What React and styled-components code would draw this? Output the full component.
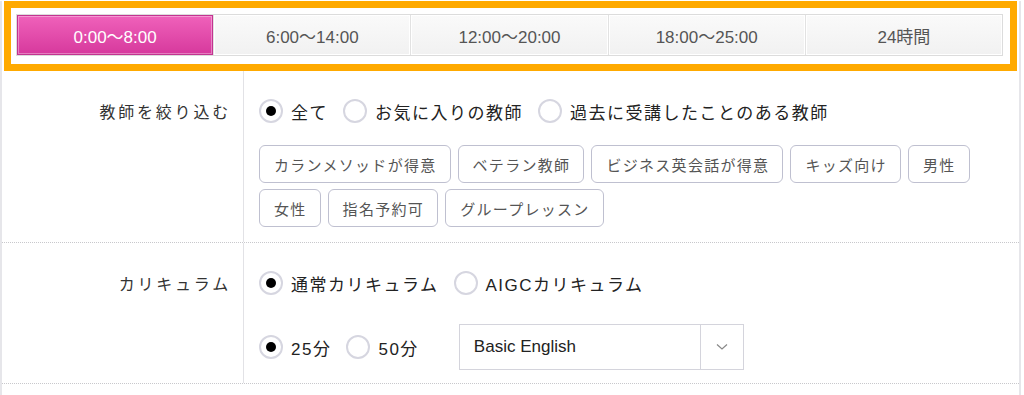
import React, { useState } from "react";
import styled, { createGlobalStyle } from "styled-components";

const GlobalStyle = createGlobalStyle`
  body {
    margin: 0;
    background: #fff;
    font-family: "Liberation Sans", "Noto Sans CJK JP", sans-serif;
    color: #333;
  }
`;

const times = ["0:00〜8:00", "6:00〜14:00", "12:00〜20:00", "18:00〜25:00", "24時間"];
const tags = [
  "カランメソッドが得意",
  "ベテラン教師",
  "ビジネス英会話が得意",
  "キッズ向け",
  "男性",
  "女性",
  "指名予約可",
  "グループレッスン",
];

const App = () => {
  const [time, setTime] = useState(0);
  const [teacher, setTeacher] = useState(0);
  const [curriculum, setCurriculum] = useState(0);
  const [length, setLength] = useState(0);

  return (
    <>
      <GlobalStyle />
      <Page>
        <Highlight>
          <TabBar>
            {times.map((t, i) => (
              <Tab key={t} $active={i === time} onClick={() => setTime(i)}>
                {t}
              </Tab>
            ))}
          </TabBar>
        </Highlight>

        <Row>
          <Label>教師を絞り込む</Label>
          <Content>
            <RadioLine>
              {["全て", "お気に入りの教師", "過去に受講したことのある教師"].map((t, i) => (
                <Radio key={t} onClick={() => setTeacher(i)}>
                  <Circle $checked={teacher === i} />
                  {t}
                </Radio>
              ))}
            </RadioLine>
            <Tags>
              {tags.map((t) => (
                <Tag key={t}>{t}</Tag>
              ))}
            </Tags>
          </Content>
        </Row>

        <Row>
          <Label>カリキュラム</Label>
          <Content>
            <RadioLine>
              {["通常カリキュラム", "AIGCカリキュラム"].map((t, i) => (
                <Radio key={t} onClick={() => setCurriculum(i)}>
                  <Circle $checked={curriculum === i} />
                  {t}
                </Radio>
              ))}
            </RadioLine>
            <SecondLine>
              {["25分", "50分"].map((t, i) => (
                <Radio key={t} onClick={() => setLength(i)}>
                  <Circle $checked={length === i} />
                  {t}
                </Radio>
              ))}
              <Select>
                <SelectValue>Basic English</SelectValue>
                <SelectArrow>
                  <svg width="12" height="8" viewBox="0 0 12 8" fill="none">
                    <path d="M1 1.5 L6 6 L11 1.5" stroke="#888" strokeWidth="1.2" />
                  </svg>
                </SelectArrow>
              </Select>
            </SecondLine>
          </Content>
        </Row>
        <Rest />
      </Page>
    </>
  );
};

export default App;

const Page = styled.div`
  width: 1021px;
  min-height: 395px;
  box-sizing: border-box;
  border-left: 2px solid #e6e6ea;
  border-right: 2px solid #e6e6ea;
`;

const Highlight = styled.div`
  margin: 1px 2px 0 2px;
  border: 7px solid #ffaa00;
  padding: 6px 7px 8px 5px;
`;

const TabBar = styled.div`
  display: grid;
  grid-template-columns: repeat(5, 1fr);
  border: 1px solid #dcdcdc;
  background: #e2e2e2;
  gap: 1px;
`;

const Tab = styled.div`
  height: 40px;
  display: flex;
  align-items: center;
  justify-content: center;
  font-size: 17px;
  cursor: pointer;
  color: ${(p) => (p.$active ? "#fff" : "#555")};
  background: ${(p) =>
    p.$active
      ? "linear-gradient(#f062bb, #d6389c)"
      : "linear-gradient(#fafafa, #f1f1f1)"};
  box-shadow: ${(p) =>
    p.$active
      ? "inset 0 0 0 1px #c23490, inset 0 0 0 2px rgba(255,255,255,0.35)"
      : "inset 0 0 0 1px #fff"};
`;

const Row = styled.div`
  display: grid;
  grid-template-columns: 242px 1fr;
  border-bottom: 1px dotted #c8c8cc;
`;

const Label = styled.div`
  border-right: 1px solid #e2e2e6;
  text-align: right;
  padding: 25px 12px 0 0;
  font-size: 16px;
  letter-spacing: 2.8px;
  line-height: 30px;
  color: #333;
  font-family: "Noto Sans CJK JP", sans-serif;
`;

const Content = styled.div`
  padding: 25px 0 13px 15px;
`;

const RadioLine = styled.div`
  display: flex;
  align-items: center;
  height: 30px;
`;

const SecondLine = styled.div`
  display: flex;
  align-items: center;
  margin-top: 26px;
  height: 46px;
`;

const Radio = styled.label`
  display: flex;
  align-items: center;
  gap: 8px;
  margin-right: 15px;
  font-size: 17px;
  letter-spacing: 1.5px;
  color: #222;
  cursor: pointer;
`;

const Circle = styled.span`
  width: 20px;
  height: 20px;
  border-radius: 50%;
  border: 2px solid #d6d6e0;
  background: #fff;
  display: flex;
  align-items: center;
  justify-content: center;
  flex-shrink: 0;

  &::after {
    content: "";
    width: 10px;
    height: 10px;
    border-radius: 50%;
    background: ${(p) => (p.$checked ? "#000" : "transparent")};
  }
`;

const Tags = styled.div`
  display: flex;
  flex-wrap: wrap;
  gap: 6px 7px;
  margin-top: 19px;
  padding-bottom: 2px;
`;

const Tag = styled.span`
  height: 38px;
  box-sizing: border-box;
  display: flex;
  align-items: center;
  padding: 0 13px 0 14px;
  border: 1.5px solid #bfc0d0;
  border-radius: 6px;
  font-size: 15px;
  letter-spacing: 1.3px;
  color: #555;
  font-family: "Noto Sans CJK JP", sans-serif;
`;

const Select = styled.div`
  display: flex;
  width: 285px;
  height: 46px;
  box-sizing: border-box;
  border: 1px solid #d4d4dc;
  margin-left: 25px;
`;

const SelectValue = styled.div`
  flex: 1;
  display: flex;
  align-items: center;
  padding-left: 14px;
  font-size: 17px;
  color: #222;
  border-right: 1px solid #d4d4dc;
`;

const SelectArrow = styled.div`
  width: 42px;
  display: flex;
  align-items: center;
  justify-content: center;
`;

const Rest = styled.div`
  height: 20px;
`;
